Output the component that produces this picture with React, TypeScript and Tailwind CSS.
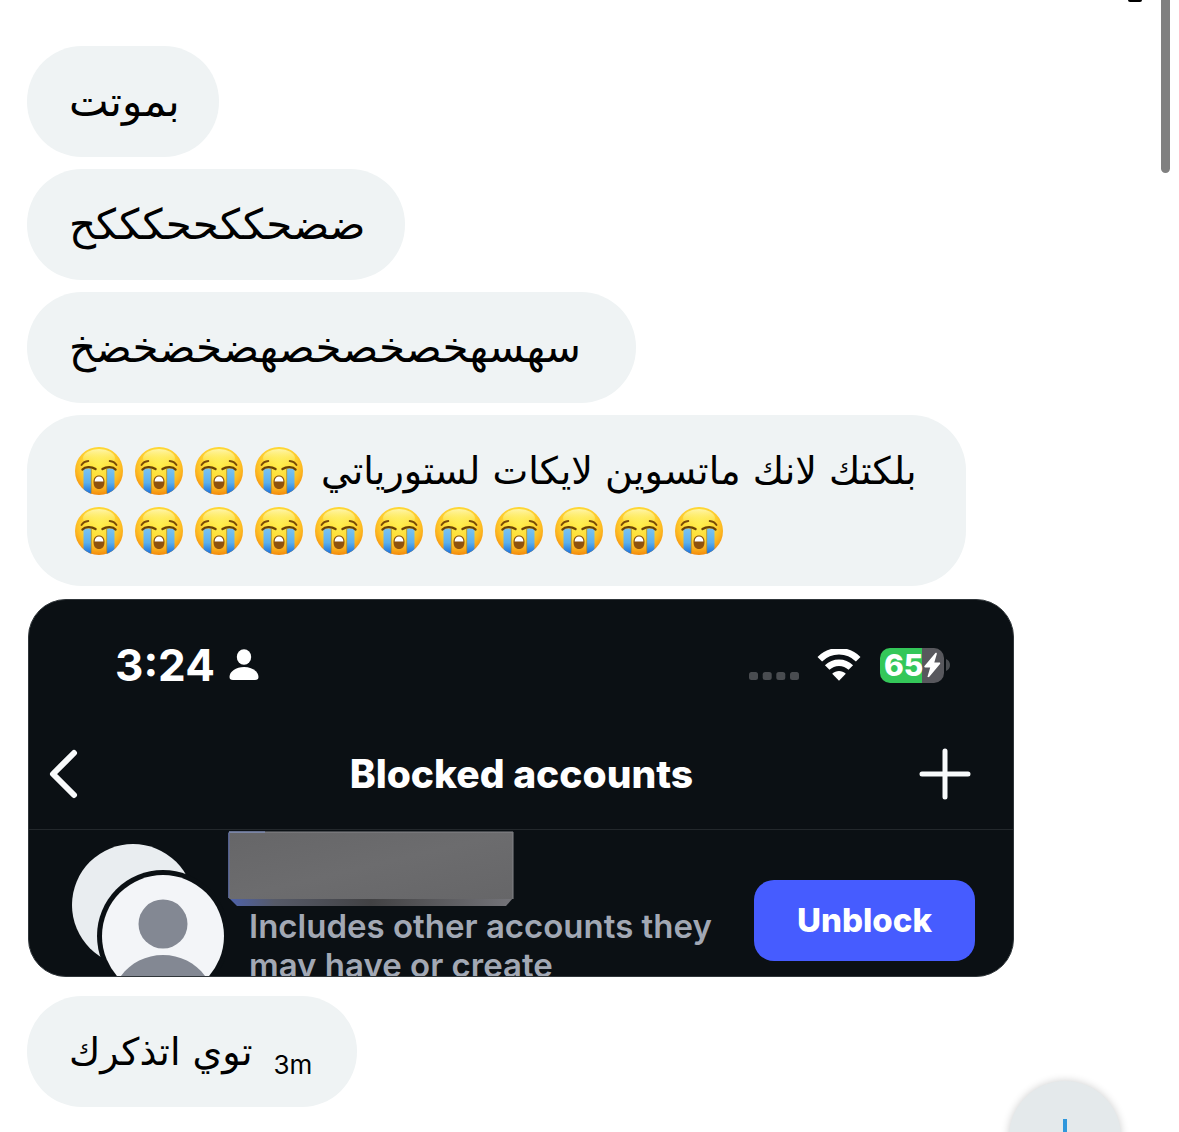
import React from 'react';
import { clsx } from 'clsx';

interface BubbleProps {
  className?: string;
  children: React.ReactNode;
}

function Bubble({ className, children }: BubbleProps) {
  return (
    <div
      className={clsx(
        'flex max-w-full flex-col items-start rounded-[55px] bg-[#eff3f4] pt-[26px] pb-[25px] pl-[42px] leading-[60px] whitespace-nowrap text-black',
        className
      )}
    >
      {children}
    </div>
  );
}

function EmojiDefs() {
  return (
    <svg className="absolute h-0 w-0" aria-hidden="true">
      <defs>
        <radialGradient id="face" cx="0.5" cy="0.36" r="0.64">
          <stop offset="0" stopColor="#ffee4e" />
          <stop offset="0.5" stopColor="#fedb36" />
          <stop offset="0.78" stopColor="#fcb41f" />
          <stop offset="1" stopColor="#f28a0c" />
        </radialGradient>
        <linearGradient id="shine" x1="0" y1="0" x2="0" y2="1">
          <stop offset="0" stopColor="#fffcc8" stopOpacity="0.8" />
          <stop offset="1" stopColor="#fff45a" stopOpacity="0" />
        </linearGradient>
        <linearGradient id="tear" x1="0" y1="0" x2="0" y2="1">
          <stop offset="0" stopColor="#7cc3f0" />
          <stop offset="0.5" stopColor="#5bb0ee" />
          <stop offset="0.9" stopColor="#1b70da" />
        </linearGradient>
        <clipPath id="head">
          <circle cx="30" cy="30" r="24" />
        </clipPath>
      </defs>
    </svg>
  );
}

function CryingFace() {
  return (
    <svg className="h-[60px] w-[60px] shrink-0" viewBox="0 0 60 60" role="img" aria-label="😭">
      <circle cx="30" cy="30" r="24" fill="url(#face)" />
      <ellipse cx="30" cy="17" rx="16" ry="9" fill="url(#shine)" />
      <g clipPath="url(#head)">
        <path d="M14.5 27.500h7.500v28h-7.500zM38 27.500h7.500v28H38z" fill="url(#tear)" />
        <path d="M22.300 28v26M37.700 28v26" stroke="#a58a38" strokeWidth="0.8" />
      </g>
      <path
        d="M13.500 28.500c2.500-2.800 8.500-3.300 13-.4M46.500 28.500c-2.500-2.800-8.500-3.300-13-.4"
        fill="none"
        stroke="#6b4204"
        strokeWidth="2.400"
        strokeLinecap="round"
      />
      <path
        d="M12.500 24c1.300-2.100 3.800-3.700 6.800-4M47.500 24c-1.300-2.100-3.800-3.700-6.800-4"
        fill="none"
        stroke="#7a4c08"
        strokeWidth="1.900"
        strokeLinecap="round"
      />
      <path
        d="M30 34.500c3.400 0 5.500 2.300 5.500 6.400 0 4.400-2.100 7-5.500 7s-5.500-2.600-5.500-7c0-4.100 2.100-6.400 5.500-6.400z"
        fill="#8f520d"
      />
      <path d="M25.600 40.500c.2-3 1.900-4.900 4.400-4.900s4.200 1.900 4.400 4.900z" fill="#fff" />
    </svg>
  );
}

function Faces({ count }: { count: number }) {
  return (
    <span className="flex">
      {Array.from({ length: count }, (_, index) => (
        <CryingFace key={index} />
      ))}
    </span>
  );
}

function StatusBar() {
  return (
    <div className="flex h-[130px] items-center justify-between pr-[63px] pl-[86px]">
      <div className="flex items-center gap-[14px]">
        <span className="text-[44px] leading-[48px] font-bold">3:24</span>
        <svg className="h-[32px] w-[30px]" viewBox="0 0 30 32" fill="#fff">
          <ellipse cx="15" cy="8" rx="7.200" ry="7.700" />
          <path d="M4 31c-2.400 0-3.500-1-3.500-3C.5 22.500 7 18 15 18s14.500 4.500 14.500 10c0 2-1.100 3-3.500 3z" />
        </svg>
      </div>
      <div className="flex items-center">
        <svg className="mt-[22px] mr-[18px] h-[10px] w-[50px]" viewBox="0 0 50 10" fill="#494c50">
          <rect x="0" y="1" width="9" height="8" rx="2.500" />
          <rect x="13.700" y="1" width="9" height="8" rx="2.500" />
          <rect x="27.300" y="1" width="9" height="8" rx="2.500" />
          <rect x="41" y="1" width="9" height="8" rx="2.500" />
        </svg>
        <svg className="mr-[19px] h-[32px] w-[44px]" viewBox="0 0 44 32" fill="none">
          <path d="M2.800 10.200C13.500-.4 30.500-.4 41.200 10.200" stroke="#fff" strokeWidth="6.500" />
          <path d="M10.200 18.500c6.700-6.500 16.900-6.500 23.600 0" stroke="#fff" strokeWidth="6.500" />
          <path d="M15.200 24.800c3.900-3.600 9.700-3.600 13.600 0L22 31.800z" fill="#fff" />
        </svg>
        <div className="flex h-[35px] w-[64px] items-center rounded-[10px] bg-linear-to-r from-[#34c759] from-65% to-[#58585d] to-65% pl-[4px]">
          <span className="text-[30px] leading-[35px] font-extrabold">65</span>
          <svg className="h-[26px] w-[18px]" viewBox="0 0 18 26" fill="#fff">
            <path d="M12.200 1.200 1.500 14c-.5.700-.2 1.400.7 1.400h5L4.700 24c-.3 1.200.8 1.600 1.600.7L17 12c.5-.7.200-1.400-.7-1.400h-5L13.800 2c.3-1.200-.8-1.700-1.600-.8z" />
          </svg>
        </div>
        <svg className="ml-[2px] h-[12px] w-[4px]" viewBox="0 0 4 12" fill="#494c50">
          <path d="M0 0c2.500 1 4 3.300 4 6s-1.500 5-4 6z" />
        </svg>
      </div>
    </div>
  );
}

function BlockedAccounts() {
  return (
    <div className="mt-px ml-px h-[378px] w-[986px] max-w-full overflow-hidden rounded-[38px] border border-[#30363a] bg-[#0b1014] font-['Inter',sans-serif] text-white">
      <StatusBar />
      <div className="flex h-[100px] items-center justify-between border-b border-[#23282c] pr-[42px] pb-[12px] pl-[19px]">
        <button aria-label="Back" className="w-[76px]">
          <svg className="h-[50px] w-[32px]" viewBox="0 0 32 50" fill="none">
            <path
              d="M26 4 5 25l21 21"
              stroke="#f8fafb"
              strokeWidth="6"
              strokeLinecap="round"
              strokeLinejoin="round"
            />
          </svg>
        </button>
        <h1 className="text-[39px] leading-[48px] font-extrabold">Blocked accounts</h1>
        <button aria-label="Add account">
          <svg className="h-[52px] w-[52px]" viewBox="0 0 52 52" fill="none">
            <path d="M26 3v46M3 26h46" stroke="#f8fafb" strokeWidth="5" strokeLinecap="round" />
          </svg>
        </button>
      </div>
      <div className="flex items-start pr-[38px] pl-[42px]">
        <svg className="mt-[13px] h-[140px] w-[156px] shrink-0" viewBox="0 0 156 140">
          <circle cx="62" cy="62" r="61" fill="#e9edf0" />
          <circle cx="92" cy="93" r="66" fill="#0b1014" />
          <circle cx="92" cy="93" r="61" fill="#f3f5f8" />
          <circle cx="92" cy="81" r="24.500" fill="#838893" />
          <path d="M92 112c-18 0-35 9-44 24v4h88v-4c-9-15-26-24-44-24z" fill="#838893" />
        </svg>
        <div className="flex flex-1 flex-col pt-px">
          <svg className="ml-px h-[76px] w-[286px]" viewBox="0 0 286 76">
            <defs>
              <linearGradient id="slab" x1="0" y1="0" x2="1" y2="0">
                <stop offset="0" stopColor="#4e62aa" />
                <stop offset="0.16" stopColor="#565a68" />
                <stop offset="0.5" stopColor="#424244" />
                <stop offset="1" stopColor="#747479" />
              </linearGradient>
              <linearGradient id="plate" x1="0" y1="0" x2="1" y2="1">
                <stop offset="0" stopColor="#666668" />
                <stop offset="0.5" stopColor="#6c6c6e" />
                <stop offset="1" stopColor="#666668" />
              </linearGradient>
            </defs>
            <path d="M1 67h284l-7 8H9z" fill="url(#slab)" />
            <rect x="1" y="1" width="284" height="67" rx="1" fill="url(#plate)" />
            <path d="M.8 67V1.500" stroke="#6474ac" strokeWidth="1.200" />
            <path d="M1 1h284v67" fill="none" stroke="#858589" />
            <path d="M1 1h36" stroke="#8295cf" />
          </svg>
          <p className="w-[490px] pl-[22px] text-[33px] leading-[39px] font-semibold text-[#a2a8b4]">
            Includes other accounts they may have or create
          </p>
        </div>
        <button className="mt-[50px] h-[81px] w-[221px] rounded-[20px] bg-[#465cff] text-[33px] font-extrabold">
          Unblock
        </button>
      </div>
    </div>
  );
}

export default function App() {
  return (
    <main className="relative h-screen overflow-hidden bg-white pt-[46px] pl-[27px] font-['DejaVu_Sans',sans-serif]">
      <EmojiDefs />
      <div className="absolute top-0 right-[37px] h-[2px] w-[14px] rounded-b-full bg-black" />
      <div className="absolute top-0 right-[9px] h-[173px] w-[9px] rounded-b-full bg-[#808080]" />

      <div className="flex flex-col items-start gap-[12px]">
        <Bubble className="w-[192px] text-[42px]">
          <p dir="rtl">بموتت</p>
        </Bubble>
        <Bubble className="w-[378px] text-[42px]">
          <p dir="rtl">ضضحككححكككح</p>
        </Bubble>
        <Bubble className="w-[609px] text-[42px]">
          <p dir="rtl">سهسهخصخصخصهضخضخضخ</p>
        </Bubble>
        <Bubble className="w-[939px] text-[38px]">
          <p dir="rtl" className="flex gap-[12px]">
            <span>بلكتك لانك ماتسوين لايكات لستورياتي</span>
            <Faces count={4} />
          </p>
          <Faces count={11} />
        </Bubble>
        <BlockedAccounts />
        <Bubble className="mt-[7px] w-[330px] text-[38px]">
          <div className="flex items-start gap-[21px]">
            <p dir="rtl">توي اتذكرك</p>
            <time className="mt-[26px] font-['Inter',sans-serif] text-[26px] leading-[34px]">3m</time>
          </div>
        </Bubble>
      </div>

      <button
        aria-label="Scroll to latest"
        className="absolute right-[58px] -bottom-[62px] flex h-[113px] w-[112px] justify-center rounded-full bg-[#e4e9eb] pt-[38px] shadow-[0_0_8px_rgba(0,0,0,0.2)]"
      >
        <svg className="h-[40px] w-[32px]" viewBox="0 0 32 40" fill="none">
          <path d="M16 0v38M2 24l14 14 14-14" stroke="#2f97dc" strokeWidth="4" />
        </svg>
      </button>
    </main>
  );
}
